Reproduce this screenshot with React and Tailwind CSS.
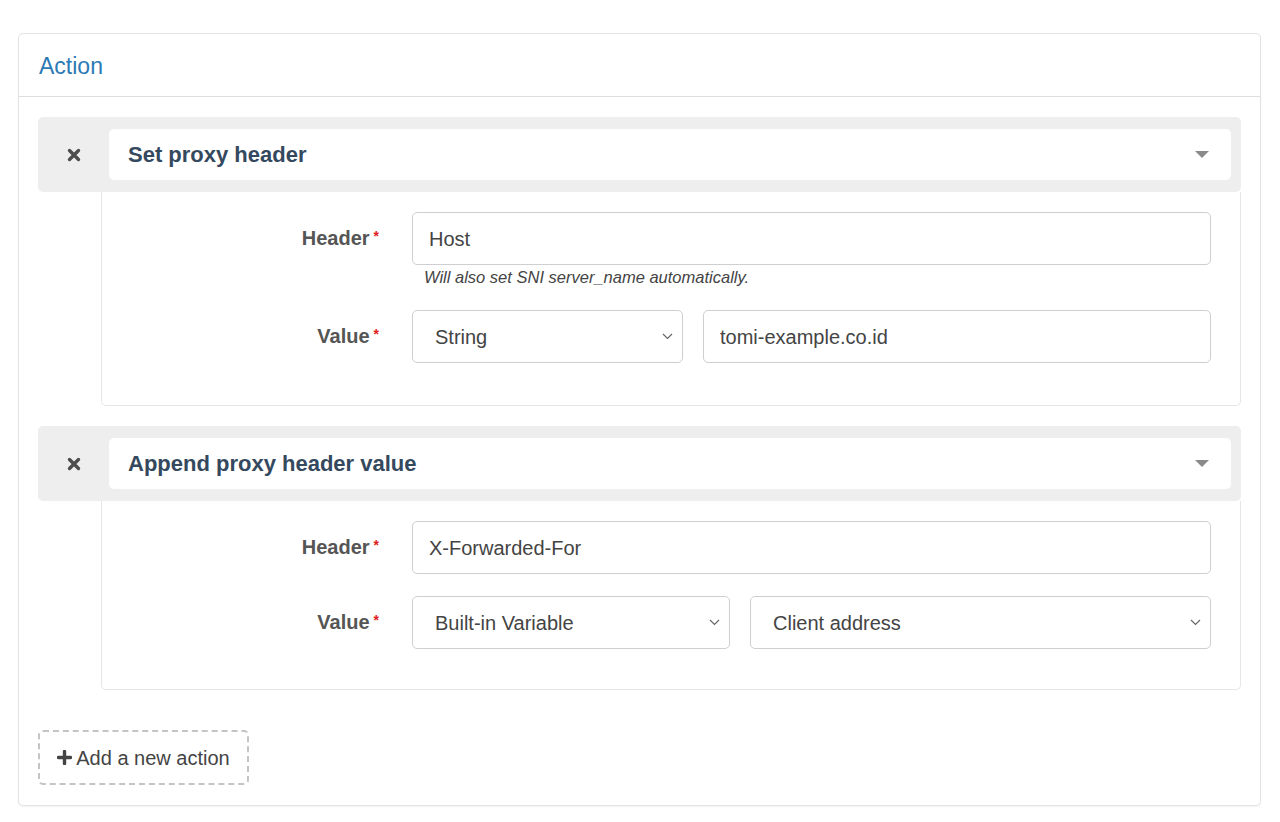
import { useState } from 'react';

const Chevron = () => (
  <svg width="11" height="7" viewBox="0 0 11 7" className="shrink-0">
    <path d="M1 1l4.5 4.5L10 1" fill="none" stroke="#666" strokeWidth="1.2" />
  </svg>
);

const TimesIcon = () => (
  <svg width="14" height="14" viewBox="0 0 14 14">
    <path d="M2.5 2.5l9 9M11.5 2.5l-9 9" stroke="#4d4d4d" strokeWidth="3.4" strokeLinecap="round" />
  </svg>
);

const Label = ({ children }) => (
  <div className="w-[281px] shrink-0 pr-[4px] text-right text-[20px] font-bold leading-[52px] text-[#555]">
    {children}
    <span className="ml-[4px] align-top text-[14px] leading-[48px] text-[#e02020]">*</span>
  </div>
);

const TextBox = ({ value, className = '' }) => (
  <div className={`flex h-[53px] items-center rounded-[5px] border border-[#cfcfcf] bg-white px-[16px] text-[20px] text-[#444] ${className}`}>
    {value}
  </div>
);

const SelectBox = ({ value, className = '' }) => (
  <div className={`flex h-[53px] items-center justify-between rounded-[5px] border border-[#cfcfcf] bg-white pl-[22px] pr-[9px] text-[20px] text-[#444] ${className}`}>
    <span>{value}</span>
    <Chevron />
  </div>
);

const ActionBlock = ({ title, children }) => (
  <div>
    <div className="flex h-[75px] items-center rounded-[5px] bg-[#eeeeee] py-[11px] pr-[10px]">
      <button className="flex w-[71px] shrink-0 items-center justify-center">
        <TimesIcon />
      </button>
      <div className="flex h-[51px] flex-1 items-center justify-between rounded-[5px] bg-white pl-[19px] pr-[22px]">
        <span className="text-[22px] font-bold text-[#34495e]">{title}</span>
        <svg width="14" height="8" viewBox="0 0 14 8">
          <path d="M0 0h14L7 7z" fill="#8a8a8a" />
        </svg>
      </div>
    </div>
    <div className="ml-[63px] rounded-b-[5px] border border-t-0 border-[#e6e6e6] pb-[20px] pr-[29px] pt-[20px]">
      {children}
    </div>
  </div>
);

export default function App() {
  const [actions] = useState([
    { id: 1, title: 'Set proxy header' },
    { id: 2, title: 'Append proxy header value' },
  ]);

  return (
    <div className="min-h-screen bg-white pt-[33px] pl-[18px] pr-[19px]" style={{ fontFamily: '"Liberation Sans", Arial, sans-serif' }}>
      <div className="rounded-[5px] border border-[#e3e3e3] bg-white shadow-[0_1px_2px_rgba(0,0,0,0.05)]">
        <div className="flex h-[63px] items-center border-b border-[#dedede] px-[20px] pt-[2px]">
          <h3 className="text-[23px] text-[#2c7ab5]">Action</h3>
        </div>
        <div className="flex flex-col gap-[20px] px-[19px] pt-[20px] pb-[20px]">
          <ActionBlock title={actions[0].title}>
            <div className="mb-[22px]">
              <div className="flex gap-[29px]">
                <Label>Header</Label>
                <TextBox value="Host" className="flex-1" />
              </div>
              <div className="ml-[322px] mt-[2px] text-[16.5px] italic leading-[21px] text-[#444]">
                Will also set SNI server_name automatically.
              </div>
            </div>
            <div className="mb-[22px] flex gap-[29px]">
              <Label>Value</Label>
              <div className="flex flex-1 gap-[20px]">
                <SelectBox value="String" className="w-[271px]" />
                <TextBox value="tomi-example.co.id" className="flex-1" />
              </div>
            </div>
          </ActionBlock>

          <ActionBlock title={actions[1].title}>
            <div className="mb-[22px] flex gap-[29px]">
              <Label>Header</Label>
              <TextBox value="X-Forwarded-For" className="flex-1" />
            </div>
            <div className="mb-[20px] flex gap-[29px]">
              <Label>Value</Label>
              <div className="flex flex-1 gap-[20px]">
                <SelectBox value="Built-in Variable" className="w-[318px]" />
                <SelectBox value="Client address" className="flex-1" />
              </div>
            </div>
          </ActionBlock>

          <div className="pt-[20px]">
            <button className="flex h-[55px] w-[211px] items-center justify-center gap-[4px] rounded-[5px] border-2 border-dashed border-[#c4c4c4] bg-white text-[20px] text-[#444]">
              <svg width="15" height="15" viewBox="0 0 15 15">
                <path d="M7.5 1.5v12M1.5 7.5h12" stroke="#444" strokeWidth="3.4" strokeLinecap="round" />
              </svg>
              Add a new action
            </button>
          </div>
        </div>
      </div>
    </div>
  );
}
